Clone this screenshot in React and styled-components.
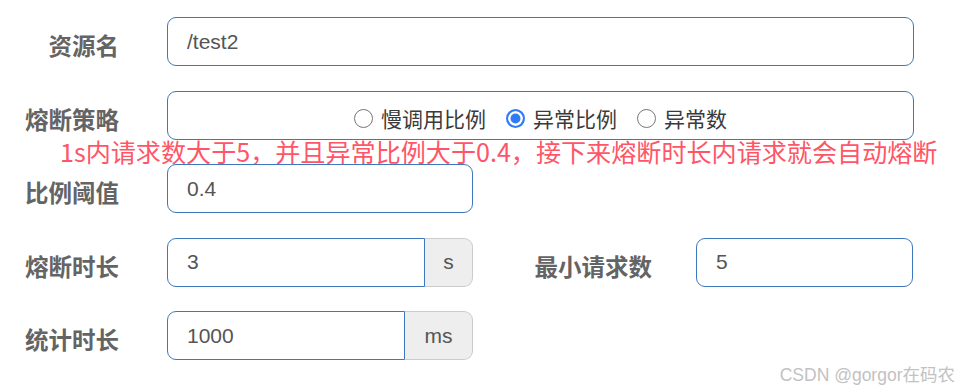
import React from 'react'
import styled, { createGlobalStyle } from 'styled-components'

const GlobalStyle = createGlobalStyle`
    body {
        margin: 0;
        background: #fff;
        font-family: 'Liberation Sans', Arial, 'Noto Sans CJK SC', sans-serif;
    }
`

const Page = styled.div`
    width: 962px;
    height: 392px;
    display: flex;
    flex-direction: column;
    overflow: hidden;
`

const Form = styled.form`
    display: flex;
    flex-direction: column;
    gap: 24.5px;
    padding-top: 17px;
`

const Group = styled.div`
    display: flex;
    flex-direction: column;
`

const Row = styled.div`
    display: flex;
    align-items: center;
    height: 49px;
`

const Label = styled.label`
    width: ${p => p.width || 119}px;
    margin-right: ${p => p.gap || 48}px;
    padding-top: 7px;
    text-align: right;
    font-family: 'Noto Sans CJK SC', sans-serif;
    font-weight: bold;
    font-size: 23.5px;
    color: #646464;
    white-space: nowrap;
`

const InputGroup = styled.div`
    display: flex;
    width: ${p => p.width}px;
    height: 49px;
`

const Input = styled.input`
    box-sizing: border-box;
    flex: 1;
    min-width: 0;
    height: 49px;
    padding: 0 19px;
    border: 1px solid #3d78bd;
    border-radius: ${p => (p.attached ? '9px 0 0 9px' : '9px')};
    font-family: 'Liberation Sans', Arial, sans-serif;
    font-size: 21px;
    color: #555;
    outline: none;
`

const Addon = styled.span`
    box-sizing: border-box;
    width: ${p => p.width}px;
    display: flex;
    align-items: center;
    justify-content: center;
    background: #eee;
    border: 1px solid #ccc;
    border-left: none;
    border-radius: 0 9px 9px 0;
    font-size: 21px;
    color: #555;
`

const RadioBox = styled.div`
    box-sizing: border-box;
    width: 747px;
    height: 49px;
    padding-top: 6px;
    border: 1px solid #3d78bd;
    border-radius: 9px;
    display: flex;
    align-items: center;
    justify-content: center;
    gap: 20px;
`

const RadioItem = styled.label`
    display: flex;
    align-items: center;
    gap: 8px;
    font-family: 'Noto Sans CJK SC', sans-serif;
    font-size: 21px;
    color: #3a3a3a;
`

const Radio = styled.input`
    appearance: none;
    box-sizing: border-box;
    width: 19px;
    height: 19px;
    margin: 0;
    border: 1.5px solid #767676;
    border-radius: 50%;
    background: #fff;

    &:checked {
        border: 2px solid #2f7bf5;
        background: #2f7bf5;
        box-shadow: inset 0 0 0 2.5px #fff;
    }
`

const Hint = styled.div`
    height: 0;
    padding-left: 60px;
    line-height: 22px;
    font-family: 'Noto Sans CJK SC', sans-serif;
    font-size: 25.1px;
    color: #ff5566;
    white-space: nowrap;
`

const Footer = styled.div`
    margin-top: auto;
    padding: 0 7px 6px 0;
    text-align: right;
    font-family: 'Liberation Sans', Arial, 'Noto Sans CJK SC', sans-serif;
    font-size: 17.5px;
    color: #c2c2c2;
`

const App = () => {
  return (
    <Page>
        <GlobalStyle />
        <Form>
            <Row>
                <Label>资源名</Label>
                <InputGroup width={747}>
                    <Input defaultValue="/test2" />
                </InputGroup>
            </Row>
            <Group>
                <Row>
                    <Label>熔断策略</Label>
                    <RadioBox>
                        <RadioItem><Radio type="radio" name="grade" />慢调用比例</RadioItem>
                        <RadioItem><Radio type="radio" name="grade" defaultChecked />异常比例</RadioItem>
                        <RadioItem><Radio type="radio" name="grade" />异常数</RadioItem>
                    </RadioBox>
                </Row>
                <Hint>1s内请求数大于5，并且异常比例大于0.4，接下来熔断时长内请求就会自动熔断</Hint>
            </Group>
            <Row>
                <Label>比例阈值</Label>
                <InputGroup width={306}>
                    <Input defaultValue="0.4" />
                </InputGroup>
            </Row>
            <Row>
                <Label>熔断时长</Label>
                <InputGroup width={306}>
                    <Input attached defaultValue="3" />
                    <Addon width={48}>s</Addon>
                </InputGroup>
                <Label width={179} gap={44}>最小请求数</Label>
                <InputGroup width={217}>
                    <Input defaultValue="5" />
                </InputGroup>
            </Row>
            <Row>
                <Label>统计时长</Label>
                <InputGroup width={306}>
                    <Input attached defaultValue="1000" />
                    <Addon width={68}>ms</Addon>
                </InputGroup>
            </Row>
        </Form>
        <Footer>CSDN @gorgor在码农</Footer>
    </Page>
  )
}

export default App
